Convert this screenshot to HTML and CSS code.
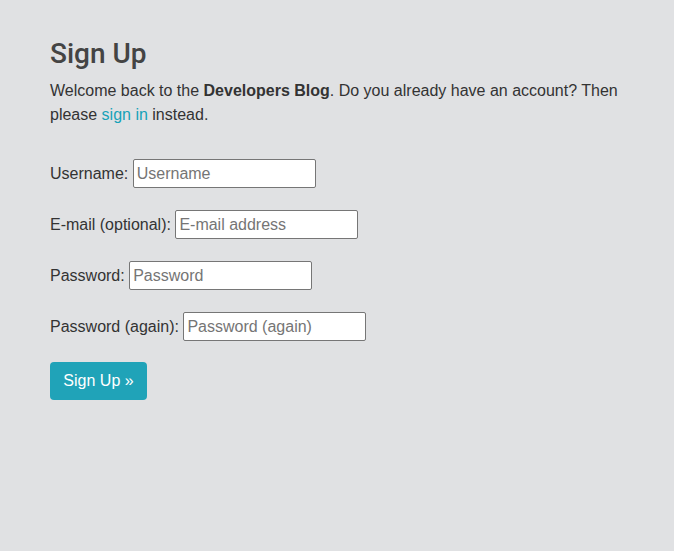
FILE: index.html
```html
<!DOCTYPE html>
<html lang="en">
<head>
<meta charset="utf-8">
<title>Sign Up</title>
<link rel="stylesheet" href="styles.css">
</head>
<body>
<main class="page">
  <h1 class="title">Sign Up</h1>
  <p class="intro">Welcome back to the <strong>Developers Blog</strong>. Do you already have an account? Then please <a class="link" href="#">sign in</a> instead.</p>
  <form class="form">
    <div class="row"><label class="label" for="u">Username:</label> <input class="field field-user" id="u" type="text" placeholder="Username"></div>
    <div class="row"><label class="label" for="e">E-mail (optional):</label> <input class="field" id="e" type="email" placeholder="E-mail address"></div>
    <div class="row"><label class="label" for="p1">Password:</label> <input class="field" id="p1" type="password" placeholder="Password"></div>
    <div class="row"><label class="label" for="p2">Password (again):</label> <input class="field" id="p2" type="password" placeholder="Password (again)"></div>
    <div class="row"><button class="btn" type="button">Sign Up &raquo;</button></div>
  </form>
</main>
</body>
</html>
```
FILE: styles.css
```css
html, body {
  margin: 0;
  padding: 0;
  background: #e0e1e3;
  height: 100%;
}
body {
  font-family: "Liberation Sans", Arial, sans-serif;
  font-size: 16px;
  line-height: 1.5;
  color: #333;
}
.page {
  padding: 37px 50px 0 50px;
}
.title {
  margin: 0 0 8px 0;
  font-family: Roboto, "Liberation Sans", Arial, sans-serif;
  font-size: 28px;
  line-height: 1.2;
  font-weight: 500;
  color: #444;
}
.intro {
  margin: 0;
  width: 580px;
}
.link {
  color: #17a2b8;
  text-decoration: none;
}
.form {
  margin-top: 31px;
  display: flex;
  flex-direction: column;
  gap: 22px;
}
.row {
  display: block;
  height: 29px;
  line-height: 31px;
}
.label {
  color: #333;
}
.field {
  box-sizing: border-box;
  width: 183px;
  height: 29px;
  margin: 0;
  padding: 1px 3px;
  border: 1px solid #767676;
  border-radius: 2px;
  background: #fff;
  font-family: "Liberation Sans", Arial, sans-serif;
  font-size: 16px;
  color: #333;
  vertical-align: baseline;
}
.field::placeholder {
  color: #757575;
}
.btn {
  box-sizing: border-box;
  height: 38px;
  width: 97px;
  padding: 0 12px;
  border: none;
  border-radius: 4px;
  background: #20a3b8;
  color: #fff;
  font-family: "Liberation Sans", Arial, sans-serif;
  font-size: 16px;
  line-height: 38px;
  vertical-align: top;
}
```
